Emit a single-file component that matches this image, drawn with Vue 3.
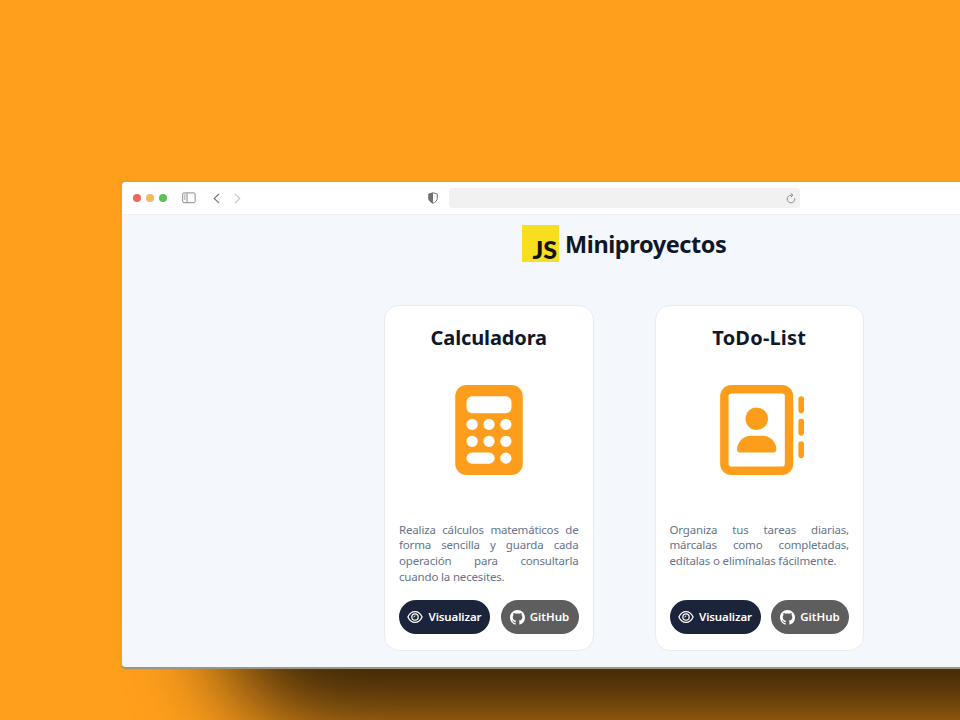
<script setup>
const projects = [
  {
    name: 'Calculadora',
    icon: 'calculator',
    text: 'Realiza cálculos matemáticos de forma sencilla y guarda cada operación para consultarla cuando la necesites.',
  },
  {
    name: 'ToDo-List',
    icon: 'book',
    text: 'Organiza tus tareas diarias, márcalas como completadas, edítalas o elimínalas fácilmente.',
  },
]
</script>

<template>
  <main class="scene">
    <div class="shadow"></div>
    <section class="window">
      <header class="toolbar">
        <div class="controls">
          <i class="dot red"></i><i class="dot amber"></i><i class="dot green"></i>
          <svg class="sidebar" viewBox="0 0 14 12" fill="none" stroke="#8a8a8a">
            <rect x=".7" y=".9" width="12.4" height="9.8" rx="1.2" />
            <path d="M5 1v10M2 3h1.5M2 5h1.5M2 7h1.5" />
          </svg>
          <svg class="back" viewBox="0 0 7 11" fill="none" stroke="#777" stroke-width="1.1"><path d="M6 1 1.2 5.5 6 10" /></svg>
          <svg class="forward" viewBox="0 0 7 11" fill="none" stroke="#c6c6c6" stroke-width="1.1"><path d="m1 1 4.8 4.5L1 10" /></svg>
        </div>
        <svg class="shield" viewBox="0 0 10 12">
          <path d="M5 .8 9.3 2v4.4c0 2.2-1.9 3.8-4.3 4.9C2.6 10.2.7 8.6.7 6.4V2z" fill="#fff" stroke="#777" />
          <path d="M5 .8.7 2v4.4c0 2.2 1.9 3.8 4.3 4.9z" fill="#707070" />
        </svg>
        <div class="address">
          <svg viewBox="0 0 10 11" fill="none" stroke="#8b8b8b"><path d="M8.7 5.3a3.8 3.8 0 1 1-3.5-3.1h1.5M4.9.4l2 1.8-2 1.9" /></svg>
        </div>
      </header>

      <div class="page">
        <h1 class="title">
          <span class="logo">JS</span>
          <span>Miniproyectos</span>
        </h1>
        <div class="cards">
          <article v-for="p in projects" :key="p.name" class="card" :class="p.icon">
            <h2>{{ p.name }}</h2>
            <svg v-if="p.icon === 'calculator'" class="picture" viewBox="-64 0 512 512">
              <rect width="384" height="512" rx="64" fill="#fc9d1b" />
              <g fill="#fff">
                <rect x="64" y="64" width="256" height="96" rx="32" />
                <circle cx="96" cy="224" r="32" /><circle cx="192" cy="224" r="32" /><circle cx="288" cy="224" r="32" />
                <circle cx="96" cy="320" r="32" /><circle cx="192" cy="320" r="32" /><circle cx="288" cy="320" r="32" />
                <rect x="64" y="384" width="160" height="64" rx="32" /><circle cx="288" cy="416" r="32" />
              </g>
            </svg>
            <svg v-else class="picture" viewBox="-3 0 512 512" fill="#fc9d1b">
              <rect x="56" y="24" width="368" height="464" rx="40" fill="none" stroke="#fc9d1b" stroke-width="48" />
              <circle cx="240" cy="192" r="64" />
              <path d="M208 288h64c44.2 0 80 35.8 80 80 0 8.8-7.2 16-16 16H144c-8.8 0-16-7.2-16-16 0-44.2 35.8-80 80-80z" />
              <rect x="477" y="64" width="32" height="96" rx="16" />
              <rect x="477" y="192" width="32" height="96" rx="16" />
              <rect x="477" y="320" width="32" height="96" rx="16" />
            </svg>
            <p>{{ p.text }}</p>
            <div class="actions">
              <button class="view">
                <svg viewBox="0 0 16 14" fill="none" stroke="#fff" stroke-width="1.25">
                  <path d="M.9 7C2.5 3.5 5 1.6 8 1.6S13.5 3.5 15.1 7C13.5 10.5 11 12.4 8 12.4S2.5 10.5.9 7z" />
                  <circle cx="8" cy="7" r="3.2" />
                  <path d="M8 5.5A1.5 1.5 0 0 1 6.5 7" stroke-width="1" />
                </svg>
                <span>Visualizar</span>
              </button>
              <button class="github">
                <svg viewBox="0 0 16 16" fill="#fff">
                  <path d="M8 0C3.58 0 0 3.58 0 8c0 3.54 2.29 6.53 5.47 7.59.4.07.55-.17.55-.38 0-.19-.01-.82-.01-1.49-2.01.37-2.53-.49-2.69-.94-.09-.23-.48-.94-.82-1.13-.28-.15-.68-.52-.01-.53.63-.01 1.08.58 1.23.82.72 1.21 1.87.87 2.33.66.07-.52.28-.87.51-1.07-1.78-.2-3.64-.89-3.64-3.95 0-.87.31-1.59.82-2.15-.08-.2-.36-1.02.08-2.12 0 0 .67-.21 2.2.82.64-.18 1.32-.27 2-.27s1.36.09 2 .27c1.53-1.04 2.2-.82 2.2-.82.44 1.1.16 1.92.08 2.12.51.56.82 1.27.82 2.15 0 3.07-1.87 3.75-3.65 3.95.29.25.54.73.54 1.48 0 1.07-.01 1.93-.01 2.2 0 .21.15.46.55.38A8.01 8.01 0 0 0 16 8c0-4.42-3.58-8-8-8z" />
                </svg>
                <span>GitHub</span>
              </button>
            </div>
          </article>
        </div>
      </div>
    </section>
  </main>
</template>

<style>
body { margin: 0; }
</style>

<style scoped>
* { box-sizing: border-box; }
.scene {
  position: relative;
  width: 960px;
  height: 720px;
  overflow: hidden;
  padding: 181px 0 0 121px;
  background: #ff9f1c;
  font-family: "Noto Sans", "Open Sans", sans-serif;
  color: #0f172a;
}
.shadow {
  position: absolute;
  left: 218px;
  top: 370px;
  width: 1000px;
  height: 359px;
  border-radius: 110px;
  background: rgba(0, 0, 0, .79);
  filter: blur(46px);
}
.window {
  position: relative;
  width: 1006px;
  height: 488px;
  border: 1px solid #aeaba0;
  border-bottom: 2px solid #9a9684;
  border-radius: 5px;
  overflow: hidden;
  background: #f4f7fb;
  box-shadow: 0 0 1px rgba(110, 125, 130, .8);
}
.toolbar {
  height: 33px;
  display: grid;
  grid-template-columns: 305.5px 21.5px 351px;
  align-items: center;
  background: #fff;
  border-bottom: 1px solid #f0f2f5;
}
.controls { display: flex; align-items: center; padding-left: 11.4px; }
.dot { width: 8px; height: 8px; border-radius: 50%; margin-right: 5px; }
.red { background: #e8695f; }
.amber { background: #f2b863; }
.green { background: #61bd58; }
.sidebar { width: 14px; height: 12px; margin-left: 10.1px; }
.back { width: 7px; height: 11px; margin-left: 16.9px; }
.forward { width: 7px; height: 11px; margin-left: 14px; }
.shield { width: 10px; height: 12px; }
.address {
  height: 20px;
  border-radius: 3px;
  background: #f1f1f1;
  display: flex;
  align-items: center;
  justify-content: flex-end;
  padding-right: 4px;
}
.address svg { width: 10px; height: 11px; }
.page { padding-top: 10px; }
.title {
  margin: 0;
  height: 37px;
  display: flex;
  justify-content: center;
  align-items: center;
  gap: 6px;
  font-size: 23.5px;
  line-height: 38px;
  font-weight: 700;
  letter-spacing: -.42px;
}
.logo {
  width: 37.5px;
  height: 37px;
  padding: 11px 2px 0 0;
  background: #f7df1e;
  color: #111;
  text-align: right;
  font: 900 25px/26px Lato, sans-serif;
  letter-spacing: 0;
}
.cards { margin-top: 43px; display: flex; justify-content: center; gap: 61px; }
.card {
  width: 209.5px;
  height: 346px;
  padding: 16px 14px 16px;
  border: 1px solid #e8ebf0;
  border-radius: 15px;
  background: #fff;
  display: flex;
  flex-direction: column;
}
h2 {
  margin: 0;
  font-size: 20px;
  line-height: 32px;
  font-weight: 700;
  letter-spacing: -.12px;
  text-align: center;
}
.book h2 { letter-spacing: .2px; }
.picture { width: 90px; height: 90px; margin: 30.5px auto 0; flex: none; }
p {
  margin: 47.2px 0 0;
  font-size: 11.5px;
  line-height: 15.7px;
  letter-spacing: -.17px;
  color: #64748b;
  text-align: justify;
}
.actions { margin-top: auto; display: flex; justify-content: space-between; }
button {
  height: 34px;
  padding: 0;
  border: 0;
  border-radius: 17px;
  display: flex;
  align-items: center;
  justify-content: center;
  gap: 5px;
  color: #fff;
  font: 600 11.5px/16px "Noto Sans", sans-serif;
  letter-spacing: -.1px;
}
.view { width: 91px; background: #1b243b; }
.github { width: 78px; background: #5e5e5e; letter-spacing: 0; }
.view svg { width: 16px; height: 14px; }
.github svg { width: 15px; height: 15px; }
</style>
